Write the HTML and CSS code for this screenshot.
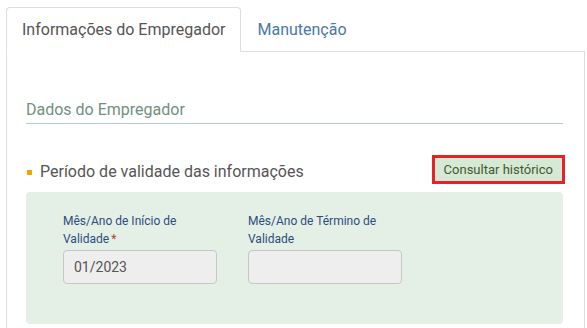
FILE: index.html
```html
<!DOCTYPE html>
<html lang="pt-BR">
<head>
<meta charset="utf-8">
<title>Informações do Empregador</title>
<link rel="stylesheet" href="styles.css">
</head>
<body>
<div class="page">
  <ul class="tabs">
    <li class="tab active">Informações do Empregador</li>
    <li class="tab">Manutenção</li>
  </ul>
  <div class="panel">
    <h2 class="section-title">Dados do Empregador</h2>
    <div class="sub-header">
      <h3 class="sub-title"><span class="bullet"></span>Período de validade das informações</h3>
      <button class="btn-history" type="button">Consultar histórico</button>
    </div>
    <div class="box">
      <div class="fields">
        <div class="field">
          <label class="label">Mês/Ano de Início de Validade<span class="req">*</span></label>
          <div class="input">01/2023</div>
        </div>
        <div class="field">
          <label class="label">Mês/Ano de Término de Validade</label>
          <div class="input"></div>
        </div>
      </div>
    </div>
  </div>
</div>
</body>
</html>
```

FILE: styles.css
```css
* { box-sizing: border-box; }
html, body { margin: 0; padding: 0; background: #fff; }
body { font-family: Roboto, "Noto Sans", "Liberation Sans", sans-serif; }
.page { padding: 7px 2px 0 6px; height: 328px; overflow: hidden; }
.tabs {
  list-style: none; margin: 0; padding: 0;
  display: flex; border-bottom: 1px solid #dddddd; height: 45px;
}
.tab {
  height: 45px; padding: 0 15px; font-size: 16px; line-height: 43px;
  color: #4a78a8; border: 1px solid transparent;
  border-radius: 4px 4px 0 0;
}
.tab.active {
  color: #555555; border-color: #dddddd; border-bottom-color: #fff;
  background: #fff; position: relative;
}
.panel {
  border: 1px solid #dddddd; border-top: none;
  padding: 47px 21px 0 19px; height: 300px;
}
.section-title {
  margin: 0; font-size: 16px; line-height: 22px; font-weight: 400;
  color: #72907f; padding: 0 0 2px; border-bottom: 1px solid #b7c7dc;
}
.sub-header {
  display: flex; justify-content: space-between; align-items: flex-end;
  margin-top: 31px;
}
.sub-title {
  margin: 0 0 1px; font-size: 16px; line-height: 22px; font-weight: 400;
  color: #555555; display: flex; align-items: center;
}
.bullet {
  width: 5px; height: 5px; background: #f5a300; display: inline-block;
  margin: 0 8px 0 1px;
}
.btn-history {
  font-family: inherit; font-size: 13px; color: #45582f;
  background: #d5e9d5; border: 3px solid #e8202a;
  height: 29px; padding: 0 9px; margin: 0 -2px 0 0; cursor: pointer;
}
.box {
  margin-top: 8px; background: #e4f0e6; border-radius: 4px;
  padding: 20px 37px 39px; height: 132px;
}
.fields { display: grid; grid-template-columns: 154px 154px; column-gap: 31px; }
.label {
  display: block; font-size: 12px; line-height: 18px; color: #2d4c7e;
  height: 38px;
}
.req { display: inline-block; color: #c0392b; margin-left: 2px; }
.input {
  height: 34px; background: #eeeeee; border: 1px solid #c6c6c6;
  border-radius: 4px; padding: 0 10px; font-size: 14px; line-height: 32px;
  color: #555555;
}
```
